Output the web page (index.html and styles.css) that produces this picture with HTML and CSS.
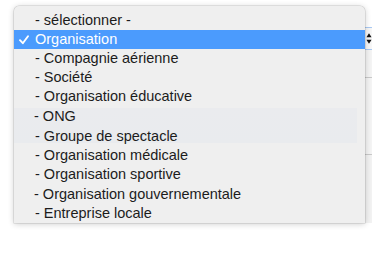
FILE: index.html
```html
<!DOCTYPE html>
<html lang="fr">
<head>
<meta charset="utf-8">
<link rel="stylesheet" href="styles.css">
</head>
<body>
<div class="stage">
  <div class="menu">
    <div class="item">- sélectionner -</div>
    <div class="item selected">
      <svg class="check" width="10" height="10" viewBox="0 0 10 10"><path d="M1 5.2 L3.8 8.2 L9 1.2" fill="none" stroke="#fff" stroke-width="1.9" stroke-linecap="round" stroke-linejoin="round"/></svg>
      Organisation
    </div>
    <div class="item">- Compagnie aérienne</div>
    <div class="item">- Société</div>
    <div class="item">- Organisation éducative</div>
    <div class="item tall shift">- ONG</div>
    <div class="item tall">- Groupe de spectacle</div>
    <div class="item">- Organisation médicale</div>
    <div class="item">- Organisation sportive</div>
    <div class="item tall shift">- Organisation gouvernementale</div>
    <div class="item">- Entreprise locale</div>
  </div>
  <div class="strip">
    <div class="select">
      <svg width="7" height="13" viewBox="0 0 7 13"><path d="M3.5 0.5 L6.5 5 L0.5 5 Z M0.5 8 L6.5 8 L3.5 12.5 Z" fill="#111"/></svg>
    </div>
    <div class="field first"></div>
    <div class="field"></div>
    <div class="field last"></div>
  </div>
</div>
</body>
</html>
```
FILE: styles.css
```css
html, body {
  margin: 0;
  padding: 0;
  background: #fff;
}
.stage {
  width: 372px;
  height: 258px;
  display: flex;
  align-items: flex-start;
  padding: 6px 0 0 14px;
  box-sizing: border-box;
  overflow: hidden;
}
.menu {
  width: 351px;
  height: 217px;
  box-sizing: border-box;
  padding-top: 5px;
  background: linear-gradient(#eaebee, #e9ebee) no-repeat 0 102px / 343px 35px, #efefef;
  border-radius: 5px 5px 0 0;
  box-shadow: 0 0 0 0.5px rgba(0,0,0,0.16), 0 1px 6px rgba(0,0,0,0.2);
  overflow: hidden;
  font-family: "Liberation Sans", Arial, sans-serif;
  font-size: 14.5px;
  color: #1c1c1c;
  position: relative;
  z-index: 1;
}
.item {
  height: 19px;
  line-height: 19px;
  padding-left: 21px;
  white-space: nowrap;
}
.item.tall {
  height: 20px;
  line-height: 20px;
}
.item.shift {
  padding-left: 20px;
}
.item.selected {
  background: #4b9bfd;
  color: #fff;
  display: flex;
  align-items: center;
  padding-left: 5px;
}
.check {
  width: 10px;
  height: 10px;
  margin-right: 6px;
}
.strip {
  width: 7px;
  height: 217px;
  display: flex;
  flex-direction: column;
}
.select {
  margin-top: 21px;
  height: 21px;
  border-top: 1px solid #a9c9f3;
  border-bottom: 1px solid #a9c9f3;
  background: #f7f7f7;
  display: flex;
  align-items: center;
  padding-left: 1px;
}
.field {
  border-bottom: 1px solid #c9c9c9;
  background: #f4f4f4;
}
.field.first {
  height: 27px;
}
.field + .field {
  height: 76px;
}
.field.last {
  flex: 1;
  border-bottom: none;
  background: #f2f2f2;
}
```
